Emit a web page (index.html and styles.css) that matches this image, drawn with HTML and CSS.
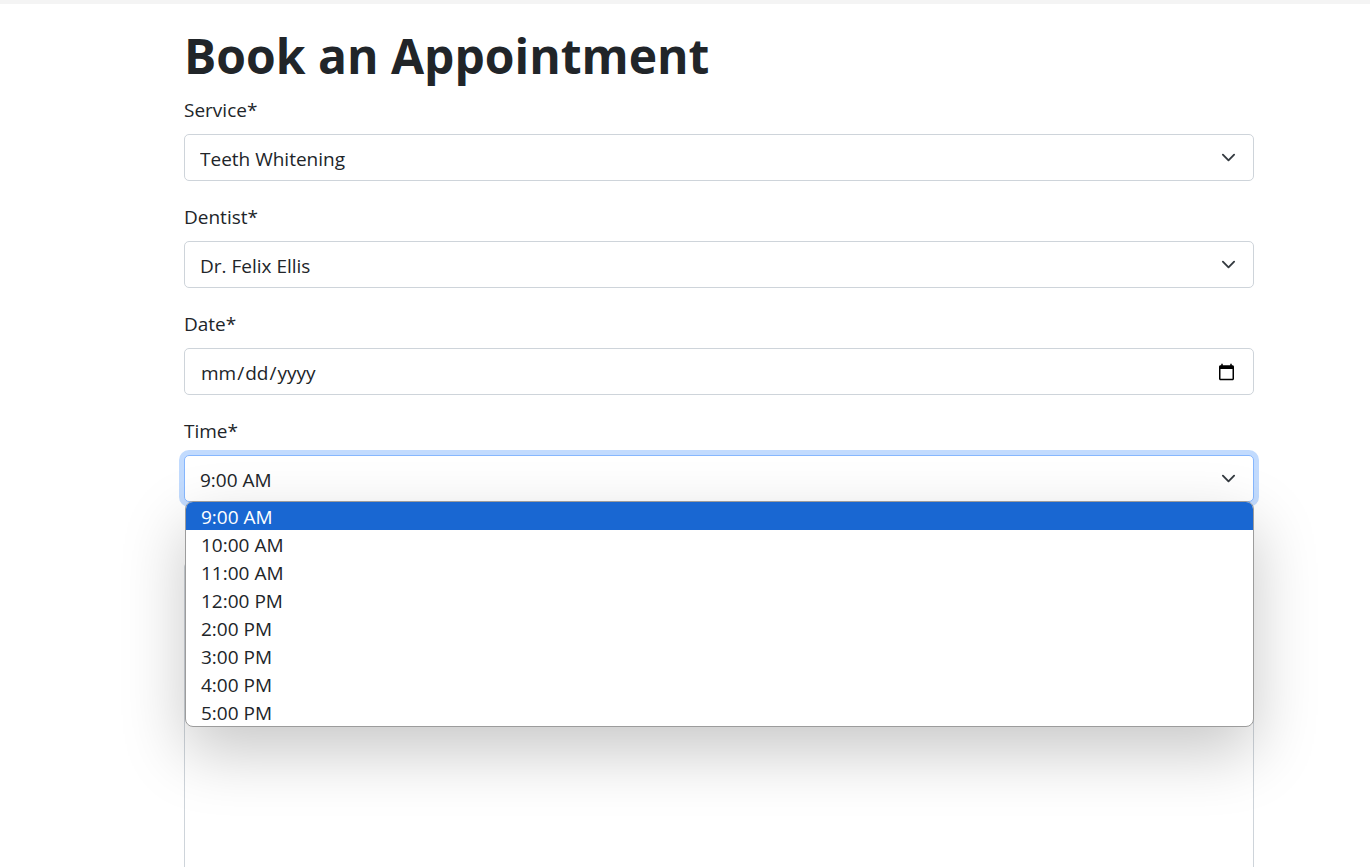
FILE: index.html
```html
<!DOCTYPE html>
<html lang="en-US">
<head>
<meta charset="utf-8">
<title>Book an Appointment</title>
<link rel="stylesheet" href="styles.css">
</head>
<body>
<main class="page">
  <h1 class="title">Book an Appointment</h1>
  <form class="form">
    <div class="field">
      <label class="label" for="service">Service*</label>
      <div class="select-wrap">
        <select class="control" id="service"><option>Teeth Whitening</option></select>
        <svg class="chevron" viewBox="0 0 16 16" aria-hidden="true"><path d="m2 5 6 6 6-6"/></svg>
      </div>
    </div>
    <div class="field">
      <label class="label" for="dentist">Dentist*</label>
      <div class="select-wrap">
        <select class="control" id="dentist"><option>Dr. Felix Ellis</option></select>
        <svg class="chevron" viewBox="0 0 16 16" aria-hidden="true"><path d="m2 5 6 6 6-6"/></svg>
      </div>
    </div>
    <div class="field">
      <label class="label" for="date">Date*</label>
      <input class="control" id="date" type="date">
    </div>
    <div class="field">
      <label class="label" for="time">Time*</label>
      <div class="select-wrap">
        <select class="control control-active" id="time"><option>9:00 AM</option></select>
        <svg class="chevron" viewBox="0 0 16 16" aria-hidden="true"><path d="m2 5 6 6 6-6"/></svg>
        <ul class="menu" role="listbox" aria-label="Time">
          <li class="option option-selected" role="option" aria-selected="true">9:00 AM</li>
          <li class="option" role="option">10:00 AM</li>
          <li class="option" role="option">11:00 AM</li>
          <li class="option" role="option">12:00 PM</li>
          <li class="option" role="option">2:00 PM</li>
          <li class="option" role="option">3:00 PM</li>
          <li class="option" role="option">4:00 PM</li>
          <li class="option" role="option">5:00 PM</li>
        </ul>
      </div>
    </div>
    <textarea class="control message" aria-label="Message"></textarea>
  </form>
</main>
</body>
</html>
```
FILE: styles.css
```css
* { box-sizing: border-box; }
body {
  margin: 0;
  background: #fff;
  color: #212529;
  font-family: "Segoe UI", "Open Sans", "Noto Sans", sans-serif;
  font-size: 19px;
  line-height: 32px;
}
.page {
  height: 100vh;
  overflow: hidden;
  padding: 22px 116px 0 184px;
  border-top: 4px solid #f4f4f4;
}
.title {
  margin: 0 0 8px;
  font-size: 48px;
  line-height: 60px;
  font-weight: 700;
}
.field { margin-bottom: 20px; }
.label { display: block; margin-bottom: 8px; }
.control {
  display: block;
  width: 100%;
  height: 47px;
  padding: 9px 15px 7px;
  border: 1px solid #ced4da;
  border-radius: 5px;
  background: #fff;
  color: inherit;
  font: inherit;
  line-height: 28px;
  appearance: none;
  outline: 0;
}
.control-active {
  border-color: #86b7fe;
  box-shadow: 0 0 0 5px #c2dbfe;
}
.select-wrap { display: grid; position: relative; align-items: center; }
.select-wrap > .control, .chevron { grid-area: 1 / 1; }
.chevron {
  justify-self: end;
  width: 15px;
  height: 15px;
  margin-right: 18px;
  fill: none;
  stroke: #343a40;
  stroke-width: 2;
  stroke-linecap: round;
  stroke-linejoin: round;
  pointer-events: none;
}
.menu {
  position: absolute;
  z-index: 1;
  top: 46px;
  left: 1px;
  right: 0;
  margin: 0;
  padding: 0;
  list-style: none;
  background: #fff;
  border: 1px solid #9c9c9c;
  border-radius: 8px;
  overflow: hidden;
  box-shadow: 0 25px 64px rgba(0, 0, 0, .22);
}
.option { padding: 2px 15px 0; line-height: 26px; }
.option-selected { background: #1967d2; color: #fff; }
.message { height: 400px; margin-top: 60px; resize: none; }
```
